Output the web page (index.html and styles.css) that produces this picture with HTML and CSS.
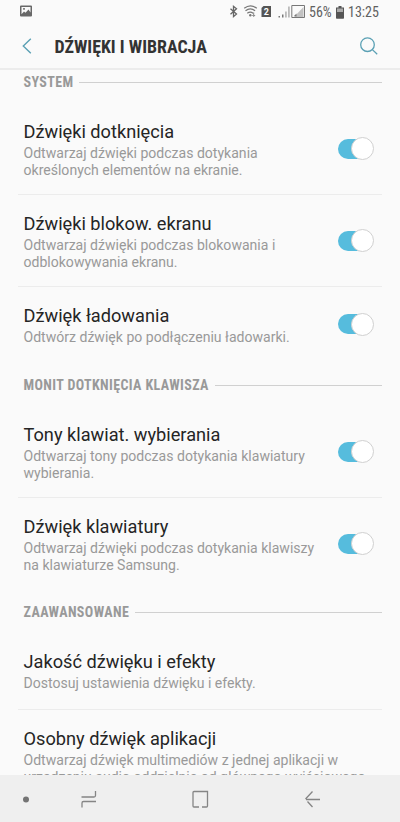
FILE: index.html
```html
<!DOCTYPE html>
<html lang="pl">
<head>
<meta charset="utf-8">
<title>Dźwięki i wibracja</title>
<link rel="stylesheet" href="styles.css">
</head>
<body>
<div class="phone">
  <div class="status">
    <svg class="status-picture" width="12" height="12" viewBox="0 0 12 12"><path fill="#686868" fill-rule="evenodd" d="M1 0.5h10a1 1 0 0 1 1 1v9a1 1 0 0 1-1 1H1a1 1 0 0 1-1-1v-9a1 1 0 0 1 1-1zM1.500 2v7.200L4 6.600l1.500 1.200L8.500 4.500l2 3V2zM3.200 3.100h1.600v1.600H3.200z"/></svg>
    <div class="status-right">
      <svg width="84" height="16" viewBox="0 0 84 16">
        <path d="M1.500 4.800l6 5.300-3 2.600V2.300l3 2.500-6 5.500" fill="none" stroke="#666" stroke-width="1.300"/>
        <g fill="none" stroke="#777" stroke-width="1.200"><path d="M15.200 4.300q6.300-4.800 12.600 0M16.500 6.700q4.800-3.600 9.600 0M18.300 9.200q3-2.200 5.800 0"/></g>
        <circle cx="21.300" cy="11.300" r="1.200" fill="#777"/>
        <path d="M24.700 8.500v3.500M23.300 11l1.400 1.500 1.400-1.500" fill="none" stroke="#777" stroke-width=".9"/>
        <path d="M34.500 2H42v11h-9.500V4z" fill="#555"/>
        <text x="34.700" y="11" class="sim">2</text>
        <path d="M49.500 12h1.500v1.500h-1.500zM53 10.500h1.500v3H53z" fill="#777"/>
        <path d="M56 7.500h1.800v6H56zM59 2.500h1.800v11H59z" fill="#bbb"/>
        <path d="M62.800 1.500h12.700v12H62.800z" fill="none" stroke="#777"/>
        <path d="M74.500 3v10H65z" fill="#c2c2c2"/><path d="M65 12l2.500-2.500v3z" fill="#777"/>
      </svg>
      <span class="percent">56%</span>
      <svg class="battery" width="8" height="13" viewBox="0 0 8 13"><path d="M2.500 0h3v1.500H8V12a.7.700 0 0 1-.7.700H.7A.7.700 0 0 1 0 12V1.500h2.500z" fill="#555"/><path d="M1 2.500h6V6H1z" fill="#aaa"/></svg>
      <span class="time">13:25</span>
    </div>
  </div>
  <header class="bar">
    <svg class="back" width="10" height="16" viewBox="0 0 10 16"><path d="M8.800.8L1.300 8l7.500 7.200" fill="none" stroke="#5aa0b4" stroke-width="1.400"/></svg>
    <h1>DŹWIĘKI I WIBRACJA</h1>
    <svg class="search" width="18" height="18" viewBox="0 0 18 18"><g fill="none" stroke="#5aa0b4" stroke-width="1.300"><circle cx="7.500" cy="7.700" r="6.800"/><path d="M12.400 12.600l4.800 4.700"/></g></svg>
  </header>
  <main class="list">
    <h2 class="first">SYSTEM</h2>
    <section class="row line"><div><h3>Dźwięki dotknięcia</h3><p>Odtwarzaj dźwięki podczas dotykania<br>określonych elementów na ekranie.</p></div><i class="switch"></i></section>
    <section class="row line"><div><h3>Dźwięki blokow. ekranu</h3><p>Odtwarzaj dźwięki podczas blokowania i<br>odblokowywania ekranu.</p></div><i class="switch"></i></section>
    <section class="row short"><div><h3>Dźwięk ładowania</h3><p>Odtwórz dźwięk po podłączeniu ładowarki.</p></div><i class="switch"></i></section>
    <h2>MONIT DOTKNIĘCIA KLAWISZA</h2>
    <section class="row line"><div><h3>Tony klawiat. wybierania</h3><p>Odtwarzaj tony podczas dotykania klawiatury<br>wybierania.</p></div><i class="switch"></i></section>
    <section class="row last"><div><h3>Dźwięk klawiatury</h3><p>Odtwarzaj dźwięki podczas dotykania klawiszy<br>na klawiaturze Samsung.</p></div><i class="switch"></i></section>
    <h2>ZAAWANSOWANE</h2>
    <section class="row short line"><div><h3>Jakość dźwięku i efekty</h3><p>Dostosuj ustawienia dźwięku i efekty.</p></div></section>
    <section class="row"><div><h3>Osobny dźwięk aplikacji</h3><p>Odtwarzaj dźwięk multimediów z jednej aplikacji w<br>urządzeniu audio oddzielnie od głównego wyjściowego</p></div></section>
  </main>
  <nav class="nav">
    <svg width="400" height="47" viewBox="0 0 400 47">
      <circle cx="26" cy="24.500" r="3" fill="#747474"/>
      <g fill="none" stroke="#858585" stroke-width="1.300">
        <path d="M81.500 22h12.500a1.500 1.500 0 0 0 1.500-1.500V16M96 26.500H83.500A1.500 1.500 0 0 0 82 28v4.500"/>
        <path d="M199 32h-5a1 1 0 0 1-1-1V17.500a1 1 0 0 1 1-1h13.500V31a1 1 0 0 1-1 1H202"/>
        <path d="M320 24.500h-14M312.500 16.500l-7 7.500M307.500 26.500l5 5.500"/>
      </g>
    </svg>
  </nav>
</div>
</body>
</html>
```
FILE: styles.css
```css
* { box-sizing: border-box; margin: 0; padding: 0; }
body { background: #fafafa; font-family: Roboto, "Liberation Sans", sans-serif; }
.phone { width: 400px; height: 822px; display: flex; flex-direction: column; overflow: hidden; }
.status { height: 24px; display: flex; justify-content: space-between; padding: 4px 21px 0 20px; color: #606060; }
.status-picture { margin-top: 1px; }
.status-right { display: flex; }
.status-right svg { flex: none; }
.sim { font: bold 9px Roboto, sans-serif; fill: #fff; }
.percent, .time { font-family: "Roboto Condensed", Roboto, sans-serif; font-stretch: 75%; font-size: 14px; line-height: 17px; white-space: nowrap; }
.percent { width: 23px; margin-left: -4px; }
.battery { margin: 2px 4px 0 4px; }
.time { width: 31px; }
.bar { height: 46px; display: flex; align-items: center; padding: 0 22px; border-bottom: 2px solid #ececec; flex: none; }
.bar h1 { flex: 1; margin: 2px 0 0 22.500px; font: bold 17.900px/24px "Roboto Condensed", Roboto, sans-serif; font-stretch: 75%; color: #333; white-space: nowrap; }
.list { height: 705px; overflow: hidden; flex: none; }
h2 { height: 42px; padding: 0 18px 0 23.500px; display: flex; align-items: center; gap: 6px; font: bold 14px/18px "Roboto Condensed", Roboto, sans-serif; font-stretch: 75%; letter-spacing: .38px; color: #999; white-space: nowrap; }
h2::after { content: ""; flex: 1; height: 1px; background: #d0d0d0; }
h2.first { margin-top: -9px; }
.row { height: 92px; margin: 0 18px; padding: 17px 8px 0 5.500px; display: flex; justify-content: space-between; }
.short { height: 77px; }
.last { height: 93px; }
.line { border-bottom: 1px solid #ececec; }
h3 { font-size: 18.200px; font-weight: 400; line-height: 24px; color: #252525; white-space: nowrap; }
p { margin-top: 1px; font-size: 14.050px; line-height: 16.500px; color: #999; white-space: nowrap; }
.switch { width: 36px; height: 20px; margin-top: 18.500px; padding: 0; border-radius: 10px; display: flex; justify-content: flex-end; align-items: center; background: linear-gradient(#56bcdd, #56bcdd) 0 0 / 26px 20px no-repeat; }
.switch::after { content: ""; width: 21px; height: 21px; flex: none; border: 1px solid #d0d0d0; border-radius: 50%; background: #fff; }
.short .switch { margin-top: 10px; }
.nav { height: 47px; background: #efefef; flex: none; }
.nav svg { display: block; }
```
